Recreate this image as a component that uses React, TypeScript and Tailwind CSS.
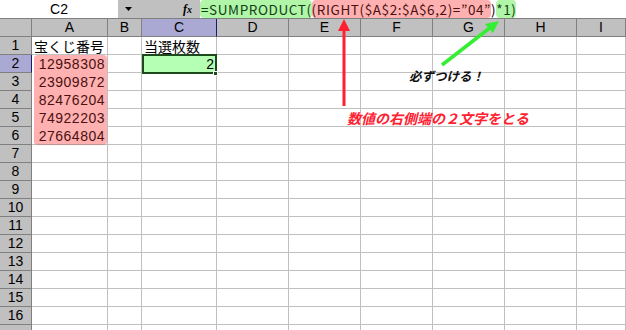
import React from "react";

const cols = ["A", "B", "C", "D", "E", "F", "G", "H", "I"];
const rows = Array.from({ length: 17 }, (_, i) => i + 1);
const nums: Record<number, string> = { 2: "12958308", 3: "23909872", 4: "82476204", 5: "74922203", 6: "27664804" };

const jp = { fontFamily: '"Noto Sans CJK JP", "Noto Sans", sans-serif' };
const lat = { fontFamily: '"Liberation Sans", Arial, sans-serif' };

function cellA(r: number) {
  if (r === 1) {
    return (
      <div className="border-r border-b border-[#c0c0c0] flex items-center text-[14px] leading-none px-[2px]" style={jp}>
        宝くじ番号
      </div>
    );
  }
  if (r >= 2 && r <= 6) {
    const round = r === 2 ? "rounded-t-[4px]" : r === 6 ? "rounded-b-[4px] shadow-[0_1px_1px_rgba(200,100,100,0.5)]" : "";
    return (
      <div className={"border-r border-[#c0c0c0] pl-[2px] " + (r === 6 ? "border-b" : "")}>
        <div className={"h-full bg-[#ffb0b0] flex items-center justify-end pr-[2px] text-[14px] leading-none text-[#4a1010] tracking-[0.5px] " + round} style={lat}>
          {nums[r]}
        </div>
      </div>
    );
  }
  return <div className="border-r border-b border-[#c0c0c0]" />;
}

export default function App() {
  return (
    <div className="relative w-[626px] h-[330px] overflow-hidden bg-white text-black">
      {/* formula bar */}
      <div className="flex h-[19px] border-b border-[#808080]">
        <div className="w-[118px] bg-white flex items-center justify-center text-[14px] leading-none" style={lat}>
          C2
        </div>
        <div className="w-[82px] bg-[#c0c0c0] flex items-center">
          <svg width="10" height="6" className="ml-[6px]" viewBox="0 0 10 6">
            <polygon points="1,1 8,1 4.5,5" fill="#000" />
          </svg>
          <span className="ml-auto mr-[8px] text-[12px] italic font-bold leading-none" style={{ fontFamily: '"Liberation Serif", serif' }}>
            f<span className="text-[10px]">x</span>
          </span>
        </div>
        <div className="flex-1 flex items-stretch text-[13.5px] leading-[18px] whitespace-pre tracking-[0.6px]" style={jp}>
          <span className="bg-[#b0f5a8] rounded-[4px] pl-[1px] text-[#133d13]">=SUMPRODUCT(</span>
          <span className="bg-[#ffb0b0] rounded-[4px] text-[#4a1010]">(RIGHT($A$2:$A$6,2)=”04”</span>
          <span>)</span>
          <span className="bg-[#b0f5a8] rounded-[4px] text-[#133d13]">*1)</span>
        </div>
      </div>

      {/* grid */}
      <div className="grid grid-cols-[32px_76px_34px_75px_72px_72px_72px_72px_72px_49px] auto-rows-[18px]">
        <div className="bg-[#c0c0c0] border-r border-b border-[#808080]" />
        {cols.map((c) => (
          <div
            key={c}
            className={
              c === "C"
                ? "bg-[#a9a9d4] border-r border-b border-r-[#1a1a6a] border-b-[#808080] flex items-center justify-center text-[14px]"
                : "bg-[#c0c0c0] border-r border-b border-[#808080] flex items-center justify-center text-[14px]"
            }
            style={lat}
          >
            {c}
          </div>
        ))}
        {rows.map((r) => (
          <React.Fragment key={r}>
            <div
              className={
                r === 2
                  ? "bg-[#a9a9d4] border-r border-b border-r-[#1a1a6a] border-b-[#808080] flex items-center justify-center text-[14px]"
                  : "bg-[#c0c0c0] border-r border-b border-[#808080] flex items-center justify-center text-[14px]"
              }
              style={lat}
            >
              {r < 17 ? r : ""}
            </div>
            {cellA(r)}
            {cols.slice(1).map((c) => (
              <div key={c} className="border-r border-b border-[#c0c0c0] flex items-center text-[14px] leading-none px-[2px]" style={jp}>
                {r === 1 && c === "C" ? "当選枚数" : ""}
              </div>
            ))}
          </React.Fragment>
        ))}
      </div>

      {/* selected C2 */}
      <div className="absolute left-[142px] top-[54px] w-[75px] h-[20px] bg-[#b4ffb4] border-2 border-[#1c4a1c] flex items-center justify-end pr-[1px] text-[14px] leading-none" style={lat}>
        2
      </div>
      <div className="absolute left-[213px] top-[71px] w-[5px] h-[5px] bg-[#1c4a1c] border border-white" />

      {/* arrows */}
      <svg className="absolute left-0 top-0" width="626" height="330">
        <line x1="344" y1="106" x2="344" y2="28" stroke="#ff2030" strokeWidth="3" />
        <polygon points="344,19 338,31 350,31" fill="#ff2030" />
        <line x1="442" y1="65" x2="491" y2="27" stroke="#33ee33" strokeWidth="3.5" />
        <polygon points="499,21 485,24 493,33" fill="#33ee33" />
      </svg>

      {/* annotations */}
      <div className="absolute left-[409px] top-[67px] text-[12.5px] font-bold italic leading-[18px] text-[#111]" style={jp}>
        必ずつける！
      </div>
      <div className="absolute left-[347px] top-[109px] text-[14px] font-bold italic leading-[18px] text-[#ff2030]" style={jp}>
        数値の右側端の２文字をとる
      </div>
    </div>
  );
}
